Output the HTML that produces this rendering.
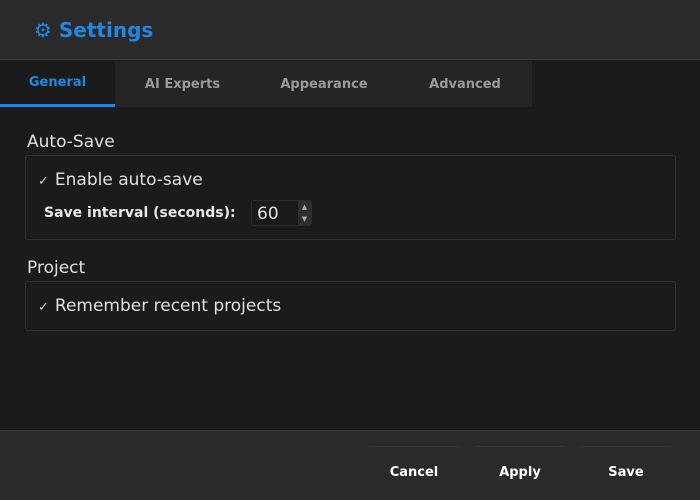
<!DOCTYPE html><html><head><style>
*{margin:0;padding:0;box-sizing:border-box}
html,body{width:700px;height:500px;overflow:hidden}
body{background:#1b1b1b;font-family:"DejaVu Sans","Liberation Sans",sans-serif;color:#e0e0e0;position:relative}
.hdr{position:absolute;left:0;top:0;width:700px;height:60px;background:#2a2a2a;border-bottom:1px solid #3c3c3c}
.hdr span{position:absolute;left:34px;top:18px;font-size:20px;font-weight:bold;color:#1e88e5}
.tabs{position:absolute;top:61px;left:0;height:46px;width:532px;background:#252525}
.tab{position:absolute;top:0;height:46px;line-height:47px;text-align:center;font-size:13px;font-weight:bold;color:#9a9a9a}
.tab.a{background:#1b1b1b;color:#1e88e5;border-bottom:3px solid #1e88e5;line-height:44px}
.lbl{position:absolute;left:27px;font-size:17px;color:#e0e0e0}
.box{position:absolute;left:25px;width:651px;border:1px solid #2f2f2f;border-radius:3px}
.chk{position:absolute;left:38px;font-size:17px}
.chk i{font-style:normal;font-size:13px;color:#ccc;margin-right:6px}
.btn{position:absolute;top:446px;width:96px;height:60px;background:#2a2a2a;border-top:1px solid #333;border-radius:5px;text-align:center;padding-top:18px;font-size:13px;font-weight:bold;color:#fff}
</style></head><body>
<div class="hdr"><span>⚙ Settings</span></div>
<div class="tabs">
<div class="tab a" style="left:0;width:115px">General</div>
<div class="tab" style="left:115px;width:135px">AI Experts</div>
<div class="tab" style="left:250px;width:148px">Appearance</div>
<div class="tab" style="left:398px;width:134px">Advanced</div>
</div>
<div class="lbl" style="top:132px">Auto-Save</div>
<div class="box" style="top:155px;height:85px"></div>
<div class="chk" style="top:170px"><i>✓</i>Enable auto-save</div>
<div style="position:absolute;left:44px;top:205px;font-size:14px;font-weight:bold;color:#e8e8e8">Save interval (seconds):</div>
<div style="position:absolute;left:251px;top:200px;width:61px;height:26px;background:#1a1a1a;border:1px solid #2c2c2c;border-radius:3px">
<span style="position:absolute;left:5px;top:3px;font-size:17px">60</span>
<div style="position:absolute;right:0;top:0;width:13px;height:24px;background:#2e2e2e;font-size:7px;color:#aaa;text-align:center;line-height:12px">▲<br>▼</div></div>
<div class="lbl" style="top:258px">Project</div>
<div class="box" style="top:281px;height:50px"></div>
<div class="chk" style="top:296px"><i>✓</i>Remember recent projects</div>
<div style="position:absolute;left:0;top:430px;width:700px;height:70px;background:#2a2a2a;border-top:1px solid #3a3a3a"></div>
<div class="btn" style="left:366px">Cancel</div>
<div class="btn" style="left:472px">Apply</div>
<div class="btn" style="left:578px">Save</div>
</body></html>
